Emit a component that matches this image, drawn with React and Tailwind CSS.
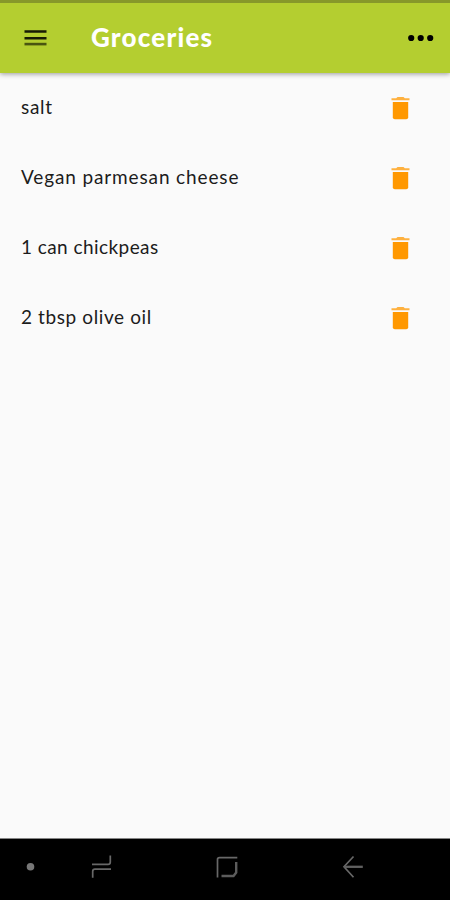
const items = [
  { name: 'salt', tracking: 'tracking-[0.7px]' },
  { name: 'Vegan parmesan cheese', tracking: 'tracking-[0.87px]' },
  { name: '1 can chickpeas', tracking: 'tracking-[0.43px]' },
  { name: '2 tbsp olive oil', tracking: 'tracking-[0.6px]' },
];

function TrashIcon() {
  return (
    <svg width="20" height="24" viewBox="-0.5 0 20 24" fill="#ff9800" aria-hidden="true">
      <path d="M1 2.2H5.7L7 .9H13L14.3 2.2H19V4.3H1Z" opacity=".75" />
      <path d="M2.3 5.9H17.7V21.2Q17.7 23.2 15.7 23.2H4.3Q2.3 23.2 2.3 21.2Z" />
    </svg>
  );
}

function Header() {
  return (
    <header className="relative flex h-[73px] items-center border-t-[3px] border-[#87982a] bg-[#b4ce30] shadow-[0_1px_5px_rgba(0,0,0,0.4)]">
      <button aria-label="Menu" className="ml-6">
        <svg width="24" height="18" viewBox="0 0 24 18" className="block" aria-hidden="true">
          <path d="M.5 2.5H22.5M.5 9.2H22.5" stroke="#171b05" strokeWidth="2.4" />
          <path d="M.5 15.1H22.5" stroke="#495510" strokeWidth="2.6" />
        </svg>
      </button>
      <h1 className="-mt-[3px] ml-[43px] text-[26px] leading-8 font-black tracking-[1.2px] text-white">Groceries</h1>
      <button aria-label="More" className="mr-4 ml-auto">
        <svg width="26" height="8" viewBox="0 0 26 8" className="block" aria-hidden="true">
          <circle cx="3.2" cy="4" r="3.1" />
          <circle cx="12.7" cy="4" r="3.1" />
          <circle cx="22.2" cy="4" r="3.1" />
        </svg>
      </button>
    </header>
  );
}

function NavigationBar() {
  return (
    <nav className="h-[62px] border-t border-[#858585] bg-black">
      <svg width="450" height="61" viewBox="0 839 450 61" fill="none" stroke="#686868" strokeWidth="1.7" aria-hidden="true">
        <circle cx="30.5" cy="866.7" r="3.8" fill="#777" stroke="none" />
        <path d="M92 864.4H108Q110.3 864.4 110.3 862V855.5M111 869.2H95Q92.7 869.2 92.7 871.5V877.8" />
        <path d="M217.5 877.5V859.5Q217.5 857.6 219.5 857.6H237.3" />
        <path d="M236.2 862V872.5L233.5 876H221.5" strokeWidth="2.4" stroke="#5c5c5c" />
        <path d="M353.5 856.5L344 866.7L353.5 877.2" />
        <path d="M344 866.8H362.8" strokeWidth="2.3" stroke="#606060" />
      </svg>
    </nav>
  );
}

export default function App() {
  return (
    <div className="flex h-[900px] w-[450px] flex-col overflow-hidden bg-[#fafafa] font-[Lato,sans-serif]">
      <Header />
      <main className="flex-1">
        <ul>
          {items.map(({ name, tracking }) => (
            <li key={name} className="flex h-[70px] items-center pr-10 pl-[21px] text-[#1c1c1c]">
              <span className={`-mt-0.5 text-[19px] leading-6 ${tracking}`}>{name}</span>
              <button aria-label={`Delete ${name}`} className="ml-auto">
                <TrashIcon />
              </button>
            </li>
          ))}
        </ul>
      </main>
      <NavigationBar />
    </div>
  );
}
